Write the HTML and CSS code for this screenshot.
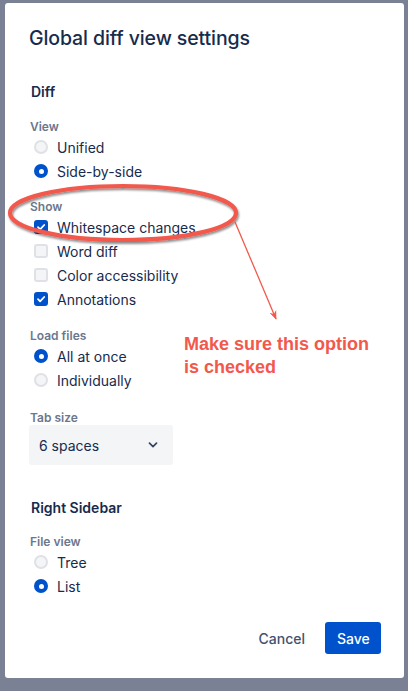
FILE: index.html
```html
<!DOCTYPE html>
<html lang="en">
<head>
<meta charset="utf-8">
<title>Global diff view settings</title>
<link rel="stylesheet" href="styles.css">
</head>
<body>
<div class="backdrop">
  <div class="dialog">
    <h1 class="title">Global diff view settings</h1>

    <h2 class="section">Diff</h2>

    <div class="group">
      <div class="label">View</div>
      <div class="opt"><span class="radio"></span><span>Unified</span></div>
      <div class="opt"><span class="radio on"></span><span>Side-by-side</span></div>
    </div>

    <div class="group show">
      <div class="label">Show</div>
      <div class="opt"><span class="check on"><svg viewBox="0 0 14 14" width="14" height="14"><path d="M4 7.2l2.1 2.1L10.2 5" fill="none" stroke="#fff" stroke-width="1.8" stroke-linecap="round" stroke-linejoin="round"/></svg></span><span>Whitespace changes</span></div>
      <div class="opt"><span class="check"></span><span>Word diff</span></div>
      <div class="opt"><span class="check"></span><span>Color accessibility</span></div>
      <div class="opt"><span class="check on"><svg viewBox="0 0 14 14" width="14" height="14"><path d="M4 7.2l2.1 2.1L10.2 5" fill="none" stroke="#fff" stroke-width="1.8" stroke-linecap="round" stroke-linejoin="round"/></svg></span><span>Annotations</span></div>
    </div>

    <div class="group">
      <div class="label">Load files</div>
      <div class="opt"><span class="radio on"></span><span>All at once</span></div>
      <div class="opt"><span class="radio"></span><span>Individually</span></div>
    </div>

    <div class="group tab">
      <div class="label">Tab size</div>
      <div class="select">
        <span>6 spaces</span>
        <svg class="chev" viewBox="0 0 10 6" width="10" height="6"><path d="M1.5 1.2L5 4.6l3.5-3.4" fill="none" stroke="#344563" stroke-width="1.7" stroke-linecap="round" stroke-linejoin="round"/></svg>
      </div>
    </div>

    <h2 class="section second">Right Sidebar</h2>

    <div class="group last">
      <div class="label">File view</div>
      <div class="opt"><span class="radio"></span><span>Tree</span></div>
      <div class="opt"><span class="radio on"></span><span>List</span></div>
    </div>

    <div class="footer">
      <button class="btn cancel">Cancel</button>
      <button class="btn save">Save</button>
    </div>

    <svg class="markup" viewBox="0 0 408 691" width="408" height="691">
      <defs>
        <filter id="sh" x="-10%" y="-30%" width="120%" height="160%">
          <feDropShadow dx="1" dy="2" stdDeviation="1.2" flood-color="#000" flood-opacity="0.45"/>
        </filter>
        <marker id="ah" viewBox="0 0 10 10" refX="9" refY="5" markerWidth="7" markerHeight="7" orient="auto">
          <path d="M0 1L10 5L0 9L3 5z" fill="#f2584b"/>
        </marker>
      </defs>
      <ellipse cx="123" cy="213" rx="113" ry="27" fill="none" stroke="#f2584b" stroke-width="4.2" filter="url(#sh)"/>
      <line x1="235" y1="222" x2="276" y2="319" stroke="#f2584b" stroke-width="1.3" marker-end="url(#ah)"/>
    </svg>
    <div class="note">Make sure this option<br>is checked</div>
  </div>
</div>
</body>
</html>
```

FILE: styles.css
```css
* { box-sizing: border-box; }
html, body { margin: 0; padding: 0; }
body {
  width: 408px;
  height: 691px;
  overflow: hidden;
  background: #7b8195;
  font-family: Inter, "Noto Sans", "Liberation Sans", sans-serif;
  color: #172b4d;
}
.backdrop {
  padding: 3px 4px 0 5px;
}
.dialog {
  position: relative;
  width: 399px;
  height: 675px;
  background: #fff;
  border-radius: 3px;
  padding: 23px 23px 0 24px;
  display: flex;
  flex-direction: column;
}
.title {
  margin: 0;
  font-size: 19.5px;
  line-height: 24px;
  font-weight: 500;
  letter-spacing: -0.1px;
  padding-left: 0;
}
.section {
  margin: 32px 0 0;
  font-size: 14px;
  line-height: 20px;
  font-weight: 600;
  padding-left: 2px;
}
.section.second { margin-top: 33px; }
.group {
  margin-top: 17px;
  display: flex;
  flex-direction: column;
}
.group.show { margin-top: 16px; }
.group.tab { margin-top: 18px; }
.group.last { margin-top: 16px; }
.label {
  font-size: 12px;
  line-height: 16px;
  font-weight: 600;
  color: #6b778c;
  padding-left: 1px;
}
.opt {
  display: flex;
  align-items: center;
  height: 24px;
  font-size: 14px;
  gap: 4px;
}
.radio, .check {
  width: 24px;
  height: 24px;
  display: flex;
  align-items: center;
  justify-content: center;
  position: relative;
}
.radio::before {
  content: "";
  width: 14px;
  height: 14px;
  border-radius: 50%;
  background: #f4f5f7;
  border: 2px solid #dfe1e6;
  box-sizing: border-box;
}
.radio.on::before {
  background: #0052cc;
  border-color: #0052cc;
}
.radio.on::after {
  content: "";
  position: absolute;
  width: 5px;
  height: 5px;
  border-radius: 50%;
  background: #fff;
  left: 9.5px;
  top: 9.5px;
}
.check::before {
  content: "";
  width: 14px;
  height: 14px;
  border-radius: 3px;
  background: #f4f5f7;
  border: 2px solid #dfe1e6;
  box-sizing: border-box;
}
.check.on::before {
  background: #0052cc;
  border-color: #0052cc;
}
.check svg {
  position: absolute;
  left: 5px;
  top: 5px;
}
.select {
  margin-top: -1px;
  width: 144px;
  height: 40px;
  background: #f4f5f7;
  border-radius: 3px;
  display: flex;
  align-items: center;
  justify-content: space-between;
  padding: 0 15px 0 10px;
  font-size: 14px;
}
.footer {
  margin-top: auto;
  margin-bottom: 24px;
  display: flex;
  justify-content: flex-end;
  gap: 8px;
}
.btn {
  font-family: inherit;
  font-size: 14px;
  font-weight: 500;
  height: 32px;
  border: 0;
  border-radius: 3px;
  padding: 0 12px;
  cursor: pointer;
}
.cancel {
  background: transparent;
  color: #42526e;
}
.save {
  background: #0052cc;
  color: #fff;
  width: 56px;
}
.markup {
  position: absolute;
  left: -5px;
  top: -3px;
  pointer-events: none;
}
.note {
  position: absolute;
  left: 179px;
  top: 330px;
  font-family: "Liberation Sans", Arial, sans-serif;
  font-weight: 700;
  font-size: 18px;
  line-height: 23px;
  color: #f2584b;
}
```
